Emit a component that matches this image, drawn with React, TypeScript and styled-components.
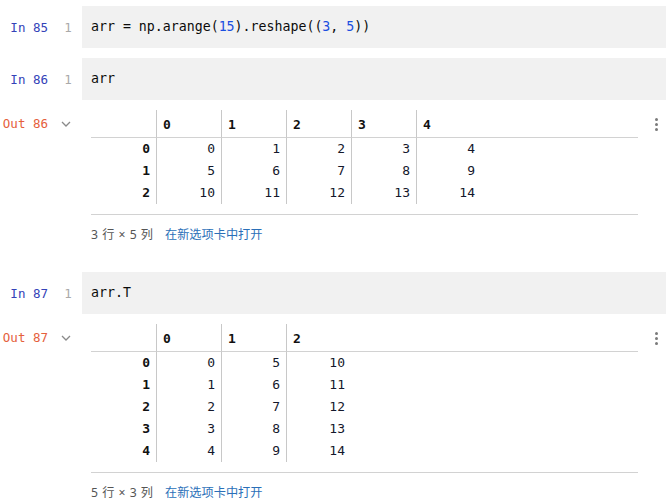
import React from "react";
import styled, { createGlobalStyle } from "styled-components";

const GlobalStyle = createGlobalStyle`
  body {
    margin: 0;
    background: #ffffff;
    font-family: "DejaVu Sans Mono", "Liberation Mono", monospace;
  }
`;

const Notebook = styled.div`
  display: flex;
  flex-direction: column;
  gap: 10px;
  padding: 6px 6px 0 0;
`;

const CellRow = styled.div`
  display: grid;
  grid-template-columns: 82px 1fr;
`;

const Gutter = styled.div<{ $height: number }>`
  display: flex;
  align-items: center;
  height: ${(p) => p.$height}px;
  font-size: 12.5px;
`;

const PromptLabel = styled.span<{ $kind: "in" | "out" }>`
  width: 48px;
  text-align: right;
  color: ${(p) => (p.$kind === "in" ? "#3443b8" : "#e5603c")};
`;

const LineNo = styled.span`
  width: 20px;
  margin-left: 10px;
  text-align: center;
  color: #a9a9a9;
`;

const Chevron = styled.span`
  width: 20px;
  margin-left: 8px;
  display: flex;
  justify-content: center;
  color: #8a8a8a;
`;

const CodeBox = styled.div`
  background: #f1f1f1;
  padding: 12px 9px;
  font-size: 13.25px;
  line-height: 18px;
  color: #0b0b0b;
  white-space: pre;
`;

const Num = styled.span`
  color: #1a4fe0;
`;

const Output = styled.div`
  position: relative;
  padding: 0 28px 19px 9px;
`;

const Grid = styled.div<{ $cols: number }>`
  display: grid;
  grid-template-columns: repeat(${(p) => p.$cols}, 65px) 1fr;
  font-size: 13px;
  color: #111;
`;

const HeadCell = styled.div<{ $border: boolean }>`
  height: 27px;
  line-height: 29px;
  padding: 0 6px;
  font-weight: bold;
  border-bottom: 1px solid #d2d2d2;
  border-left: ${(p) => (p.$border ? "1px solid #c8c8c8" : "none")};
`;

const BodyCell = styled.div<{ $border: boolean; $index?: boolean }>`
  height: 22px;
  line-height: 22px;
  padding: 0 6px;
  text-align: right;
  font-weight: ${(p) => (p.$index ? "bold" : "normal")};
  color: ${(p) => (p.$index ? "#111" : "#14182c")};
  border-left: ${(p) => (p.$border ? "1px solid #c8c8c8" : "none")};
`;

const Divider = styled.div`
  margin-top: 10px;
  border-top: 1px solid #d2d2d2;
`;

const Footer = styled.div`
  margin-top: 12px;
  display: flex;
  gap: 12px;
  font-family: "Noto Sans", "Noto Sans CJK SC", sans-serif;
  font-size: 12.2px;
  line-height: 16px;
  color: #555;
`;

const Dims = styled.span`
  word-spacing: 1px;
`;

const OpenLink = styled.a`
  color: #2a6fb8;
  text-decoration: none;
  cursor: pointer;
`;

const MenuButton = styled.div`
  position: absolute;
  right: 8px;
  top: 8px;
  display: flex;
  flex-direction: column;
  gap: 2px;

  span {
    width: 3px;
    height: 3px;
    border-radius: 50%;
    background: #7a7a7a;
  }
`;

const ChevronIcon = () => (
  <svg width="10" height="6" viewBox="0 0 10 6">
    <path d="M1 1l4 4 4-4" fill="none" stroke="#8a8a8a" strokeWidth="1.3" />
  </svg>
);

const CodeCell = ({ n, children }: { n: number; children: React.ReactNode }) => (
  <CellRow>
    <Gutter $height={42}>
      <PromptLabel $kind="in">In {n}</PromptLabel>
      <LineNo>1</LineNo>
    </Gutter>
    <CodeBox>{children}</CodeBox>
  </CellRow>
);

const FrameOutput = ({ n, data }: { n: number; data: number[][] }) => {
  const cols = data[0].length;
  return (
    <CellRow>
      <Gutter $height={27}>
        <PromptLabel $kind="out">Out {n}</PromptLabel>
        <Chevron>
          <ChevronIcon />
        </Chevron>
      </Gutter>
      <Output>
        <Grid $cols={cols + 1}>
          <HeadCell $border={false} />
          {data[0].map((_, c) => (
            <HeadCell key={c} $border>
              {c}
            </HeadCell>
          ))}
          <HeadCell $border={false} />
          {data.map((row, r) => (
            <React.Fragment key={r}>
              <BodyCell $border={false} $index>
                {r}
              </BodyCell>
              {row.map((v, c) => (
                <BodyCell key={c} $border>
                  {v}
                </BodyCell>
              ))}
              <BodyCell $border={false} />
            </React.Fragment>
          ))}
        </Grid>
        <Divider />
        <Footer>
          <Dims>
            {data.length} 行 × {cols} 列
          </Dims>
          <OpenLink>在新选项卡中打开</OpenLink>
        </Footer>
        <MenuButton>
          <span />
          <span />
          <span />
        </MenuButton>
      </Output>
    </CellRow>
  );
};

const arr = [0, 1, 2].map((r) => [0, 1, 2, 3, 4].map((c) => r * 5 + c));
const arrT = [0, 1, 2, 3, 4].map((r) => [0, 1, 2].map((c) => c * 5 + r));

export default function App() {
  return (
    <>
      <GlobalStyle />
      <Notebook>
        <CodeCell n={85}>
          arr = np.arange(<Num>15</Num>).reshape((<Num>3</Num>, <Num>5</Num>))
        </CodeCell>
        <CodeCell n={86}>arr</CodeCell>
        <FrameOutput n={86} data={arr} />
        <CodeCell n={87}>arr.T</CodeCell>
        <FrameOutput n={87} data={arrT} />
      </Notebook>
    </>
  );
}
